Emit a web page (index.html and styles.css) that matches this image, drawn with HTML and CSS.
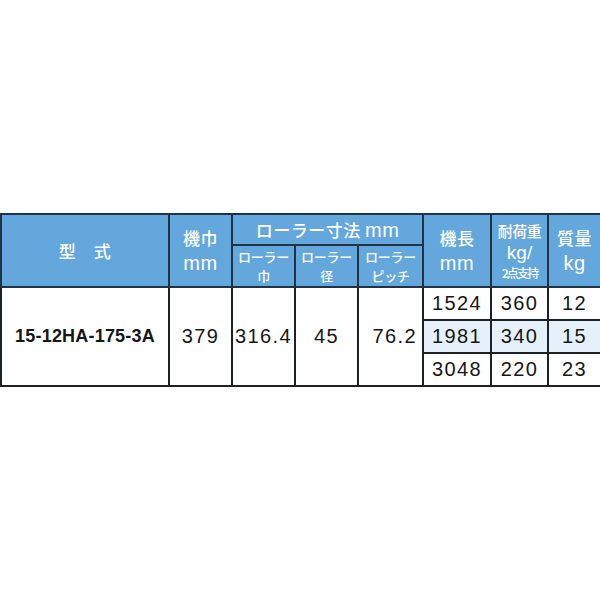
FILE: index.html
```html
<!DOCTYPE html>
<html lang="ja">
<head>
<meta charset="utf-8">
<link rel="stylesheet" href="styles.css">
</head>
<body>
<div class="page">
<table class="spec">
  <colgroup>
    <col class="c1"><col class="c2"><col class="c3"><col class="c4"><col class="c5"><col class="c6"><col class="c7"><col class="c8">
  </colgroup>
  <thead>
    <tr class="h1">
      <th rowspan="2" class="big">型　式</th>
      <th rowspan="2" class="big two">機巾<br><span class="unit">mm</span></th>
      <th colspan="3" class="big">ローラー寸法 <span class="unit">mm</span></th>
      <th rowspan="2" class="big two">機長<br><span class="unit">mm</span></th>
      <th rowspan="2" class="load"><span class="l1">耐荷重</span><span class="l2">kg/</span><span class="l3">2点支持</span></th>
      <th rowspan="2" class="big two">質量<br><span class="unit">kg</span></th>
    </tr>
    <tr class="h2">
      <th class="sub"><span class="s1">ローラー</span><span class="s2">巾</span></th>
      <th class="sub"><span class="s1">ローラー</span><span class="s2">径</span></th>
      <th class="sub"><span class="s1">ローラー</span><span class="s2">ピッチ</span></th>
    </tr>
  </thead>
  <tbody>
    <tr>
      <td rowspan="3" class="model">15-12HA-175-3A</td>
      <td rowspan="3">379</td>
      <td rowspan="3">316.4</td>
      <td rowspan="3">45</td>
      <td rowspan="3" class="right">76.2</td>
      <td>1524</td>
      <td>360</td>
      <td>12</td>
    </tr>
    <tr class="alt">
      <td>1981</td>
      <td>340</td>
      <td>15</td>
    </tr>
    <tr>
      <td>3048</td>
      <td>220</td>
      <td>23</td>
    </tr>
  </tbody>
</table>
</div>
</body>
</html>
```

FILE: styles.css
```css
html, body {
  margin: 0;
  padding: 0;
  background: #ffffff;
}
.page {
  padding-top: 213px;
}
.spec {
  width: 600px;
  border-collapse: collapse;
  table-layout: fixed;
  font-family: "Noto Sans CJK JP", "Noto Sans", sans-serif;
}
.c1 { width: 168px; }
.c2 { width: 63px; }
.c3 { width: 63px; }
.c4 { width: 63px; }
.c5 { width: 65px; }
.c6 { width: 68px; }
.c7 { width: 57px; }
.c8 { width: 53px; }

.spec th, .spec td {
  border: 2px solid #1d2226;
  padding: 0;
  text-align: center;
  vertical-align: middle;
}
.spec th {
  background: #63a7dc;
  color: #ffffff;
  font-weight: 500;
  border-color: #1f3346;
}
.h1 { height: 31px; }
.h2 { height: 42px; }
.big {
  font-size: 17px;
  line-height: 25px;
  letter-spacing: 0.5px;
}
.two {
  line-height: 25px;
}
.unit {
  font-family: "Liberation Sans", sans-serif;
  font-weight: normal;
  font-size: 20px;
  letter-spacing: 0.5px;
}
.sub span {
  display: block;
  font-size: 13px;
  line-height: 19px;
  letter-spacing: -0.3px;
}
.load span {
  display: block;
}
.l1 { font-size: 15px; line-height: 22px; letter-spacing: -0.5px; }
.l2 { font-family: "Liberation Sans", sans-serif; font-weight: normal; font-size: 19px; line-height: 22px; }
.l3 { font-size: 12px; line-height: 18px; letter-spacing: -1.8px; }

.spec td {
  font-family: "Liberation Sans", "Noto Sans CJK JP", sans-serif;
  font-size: 20px;
  letter-spacing: 1.4px;
  color: #161616;
  height: 31px;
  background: #ffffff;
}
.spec tbody tr.alt td {
  background: #e6f0fa;
}
.spec td.model {
  font-weight: bold;
  font-size: 18px;
  letter-spacing: 0.2px;
  background: #ffffff;
}
.spec td.right {
  text-align: right;
  padding-right: 5px;
}
```
